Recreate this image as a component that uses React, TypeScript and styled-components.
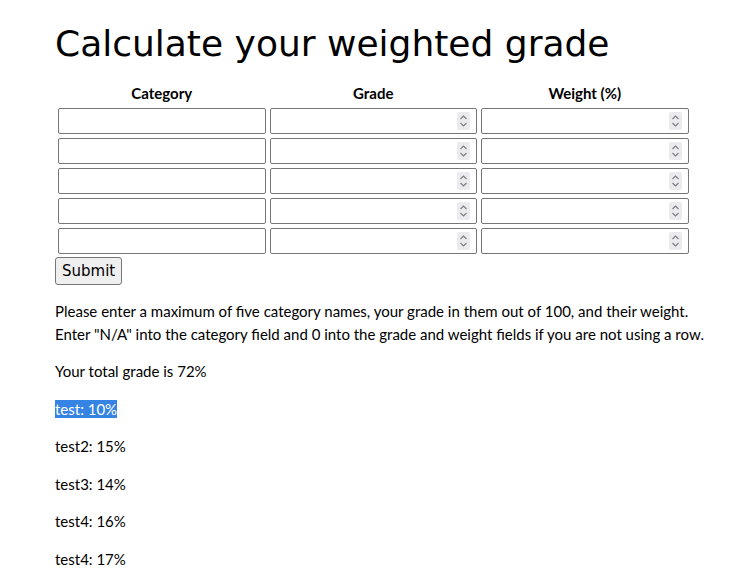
import React from 'react';
import styled, { createGlobalStyle } from 'styled-components';

const GlobalStyle = createGlobalStyle`
  body {
    margin: 0;
    background: #ffffff;
    color: #000000;
    font-family: Lato, "Liberation Sans", sans-serif;
    font-size: 15px;
    line-height: 1.5;
  }
`;

const Page = styled.main`
  width: 662px;
  padding-left: 55px;
`;

const Title = styled.h1`
  margin: 22px 0 16px;
  font-family: "DejaVu Sans", "Open Sans", sans-serif;
  font-weight: 400;
  font-size: 36px;
  line-height: 43px;
`;

const Table = styled.table`
  border-spacing: 2px;
  margin: 0;
`;

const HeadCell = styled.th`
  padding: 1px 1px 3px;
  font-weight: 700;
  font-size: 15px;
  line-height: 1.2;
  text-align: center;
`;

const Cell = styled.td`
  padding: 1px;
`;

const FieldWrap = styled.div`
  position: relative;
  width: 207.5px;
  height: 26px;
`;

const Field = styled.input`
  box-sizing: border-box;
  width: 100%;
  height: 100%;
  margin: 0;
  border: 1px solid #767676;
  border-radius: 2px;
  background: #fff;
  font-family: Lato, sans-serif;
  font-size: 14px;
  -moz-appearance: textfield;

  &::-webkit-inner-spin-button,
  &::-webkit-outer-spin-button {
    -webkit-appearance: none;
    margin: 0;
  }
`;

const Spinner = styled.span`
  position: absolute;
  top: 4px;
  right: 7px;
  width: 13px;
  height: 18px;
  border-radius: 2px;
  background: #ebebef;
  display: flex;
  align-items: center;
  justify-content: center;
  pointer-events: none;
`;

const SubmitButton = styled.button`
  display: block;
  margin: 0;
  padding: 2px 6px;
  height: 28px;
  font-family: "DejaVu Sans", "Open Sans", sans-serif;
  font-weight: 400;
  font-size: 15px;
  color: #000;
  background: #efefef;
  border: 1px solid #767676;
  border-radius: 3px;
`;

const Text = styled.p`
  margin: 15px 0;
`;

const Selected = styled.span`
  background: #3584e4;
  color: #fff;
`;

function NumberField() {
  return (
    <FieldWrap>
      <Field type="number" />
      <Spinner>
        <svg width="9" height="14" viewBox="0 0 9 14" fill="none" stroke="#7a7a80" strokeWidth="1.1">
          <path d="M1.5 5 L4.5 2 L7.5 5" />
          <path d="M1.5 9 L4.5 12 L7.5 9" />
        </svg>
      </Spinner>
    </FieldWrap>
  );
}

const rows = [0, 1, 2, 3, 4];
const results = ['test2: 15%', 'test3: 14%', 'test4: 16%', 'test4: 17%'];

export default function App() {
  return (
    <>
      <GlobalStyle />
      <Page>
        <Title>Calculate your weighted grade</Title>
        <Table>
          <thead>
            <tr>
              <HeadCell>Category</HeadCell>
              <HeadCell>Grade</HeadCell>
              <HeadCell>Weight (%)</HeadCell>
            </tr>
          </thead>
          <tbody>
            {rows.map((r) => (
              <tr key={r}>
                <Cell>
                  <FieldWrap>
                    <Field type="text" />
                  </FieldWrap>
                </Cell>
                <Cell>
                  <NumberField />
                </Cell>
                <Cell>
                  <NumberField />
                </Cell>
              </tr>
            ))}
          </tbody>
        </Table>
        <SubmitButton type="button">Submit</SubmitButton>
        <Text>
          Please enter a maximum of five category names, your grade in them out of 100, and their weight.
          Enter "N/A" into the category field and 0 into the grade and weight fields if you are not using a row.
        </Text>
        <Text>Your total grade is 72%</Text>
        <Text>
          <Selected>test: 10%</Selected>
        </Text>
        {results.map((r, i) => (
          <Text key={i}>{r}</Text>
        ))}
      </Page>
    </>
  );
}
